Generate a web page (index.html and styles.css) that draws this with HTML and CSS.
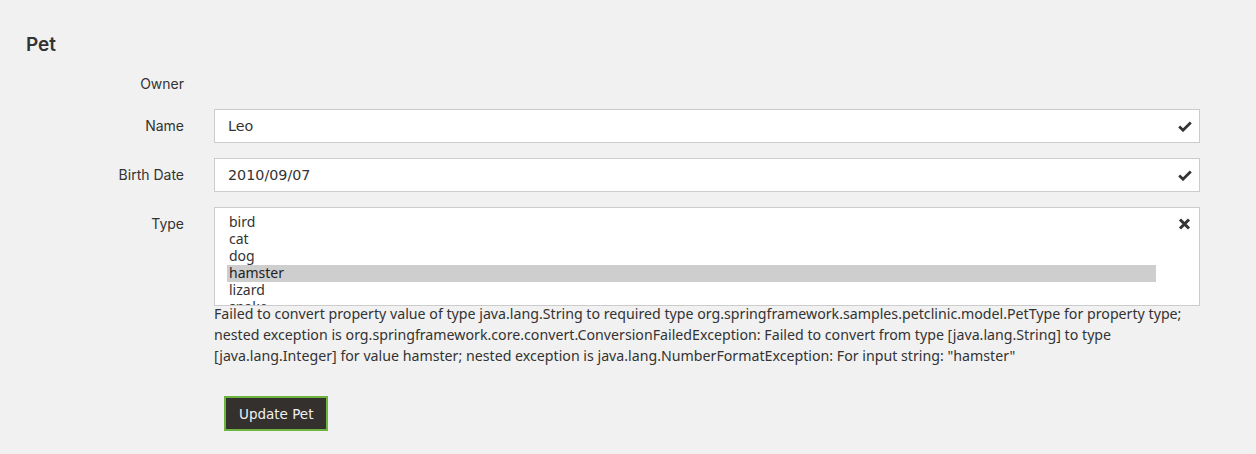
FILE: index.html
```html
<!DOCTYPE html>
<html lang="en">
<head>
<meta charset="utf-8">
<title>Pet</title>
<link rel="stylesheet" href="styles.css">
</head>
<body>
<main class="page">
  <h2 class="title">Pet</h2>
  <form class="form">
    <div class="row row-owner">
      <label class="lbl">Owner</label>
      <div class="ctl"></div>
    </div>
    <div class="row">
      <label class="lbl" for="name">Name</label>
      <div class="ctl">
        <input class="input" id="name" type="text" value="Leo">
        <svg class="fb" viewBox="0 0 14 11" width="14" height="11"><path d="M1.2 5.6 L5 9.2 L12.8 1.6" fill="none" stroke="#333" stroke-width="2.8" stroke-linejoin="miter" stroke-linecap="butt"/></svg>
      </div>
    </div>
    <div class="row">
      <label class="lbl" for="birth">Birth Date</label>
      <div class="ctl">
        <input class="input" id="birth" type="text" value="2010/09/07">
        <svg class="fb" viewBox="0 0 14 11" width="14" height="11"><path d="M1.2 5.6 L5 9.2 L12.8 1.6" fill="none" stroke="#333" stroke-width="2.8" stroke-linejoin="miter" stroke-linecap="butt"/></svg>
      </div>
    </div>
    <div class="row row-type">
      <label class="lbl">Type</label>
      <div class="ctl">
        <div class="listbox" role="listbox">
          <div class="opt">bird</div>
          <div class="opt">cat</div>
          <div class="opt">dog</div>
          <div class="opt sel">hamster</div>
          <div class="opt">lizard</div>
          <div class="opt">snake</div>
        </div>
        <svg class="fb fb-x" viewBox="0 0 13 12" width="13" height="12"><path d="M2 1.5 L11 10.5 M11 1.5 L2 10.5" fill="none" stroke="#333" stroke-width="3"/></svg>
        <p class="error">Failed to convert property value of type java.lang.String to required type org.springframework.samples.petclinic.model.PetType for property type; nested exception is org.springframework.core.convert.ConversionFailedException: Failed to convert from type [java.lang.String] to type [java.lang.Integer] for value hamster; nested exception is java.lang.NumberFormatException: For input string: "hamster"</p>
      </div>
    </div>
    <div class="actions">
      <button class="btn" type="submit">Update Pet</button>
    </div>
  </form>
</main>
</body>
</html>
```
FILE: styles.css
```css
html, body {
  margin: 0;
  padding: 0;
  background: #f1f1f1;
}
body {
  font-family: "Inter", "Liberation Sans", sans-serif;
  color: #333;
  height: 454px;
  overflow: hidden;
}
.page {
  padding: 33px 56px 0 26px;
}
.title {
  margin: 0;
  font-size: 19px;
  font-weight: 600;
  line-height: 24px;
  color: #333;
}
.form {
  margin-top: 13px;
  display: flex;
  flex-direction: column;
}
.row {
  display: flex;
  gap: 30px;
  margin-bottom: 15px;
}
.row-owner {
  height: 24px;
  margin-bottom: 15px;
}
.lbl {
  width: 158px;
  flex: none;
  text-align: right;
  font-size: 14px;
  line-height: 18px;
  padding-top: 8px;
  color: #333;
}
.row-owner .lbl {
  padding-top: 5px;
}
.ctl {
  position: relative;
  flex: 1;
  min-width: 0;
}
.input {
  display: block;
  box-sizing: border-box;
  width: 100%;
  height: 34px;
  margin: 0;
  padding: 0 42px 0 13px;
  border: 1px solid #ccc;
  border-radius: 0;
  background: #fff;
  font-family: "DejaVu Sans", "Verdana", sans-serif;
  font-size: 14.3px;
  color: #333;
  outline: none;
}
.fb {
  position: absolute;
  right: 8px;
  top: 12px;
}
.fb-x {
  top: 11px;
  right: 9px;
}
.listbox {
  box-sizing: border-box;
  height: 99px;
  border: 1px solid #ccc;
  background: #fff;
  padding: 6px 43px 0 12px;
  overflow: hidden;
  font-family: "Noto Sans", "Open Sans", sans-serif;
  font-size: 14px;
  color: #333;
}
.opt {
  height: 17px;
  line-height: 15px;
  padding: 0 2px 2px;
  box-sizing: border-box;
  white-space: nowrap;
}
.opt.sel {
  background: #cecece;
  color: #222;
}
.error {
  margin: -3px 0 0;
  font-family: "Noto Sans", "Open Sans", sans-serif;
  font-size: 14.2px;
  line-height: 21px;
  color: #333;
  padding-right: 10px;
}
.actions {
  padding-left: 198px;
  margin-top: 15px;
}
.btn {
  box-sizing: border-box;
  height: 35px;
  padding: 0 13px;
  border: 2px solid #6db33f;
  border-radius: 0;
  background: #34302d;
  color: #f1f1f1;
  font-family: "DejaVu Sans", "Verdana", sans-serif;
  font-size: 13.5px;
  cursor: pointer;
}
```
